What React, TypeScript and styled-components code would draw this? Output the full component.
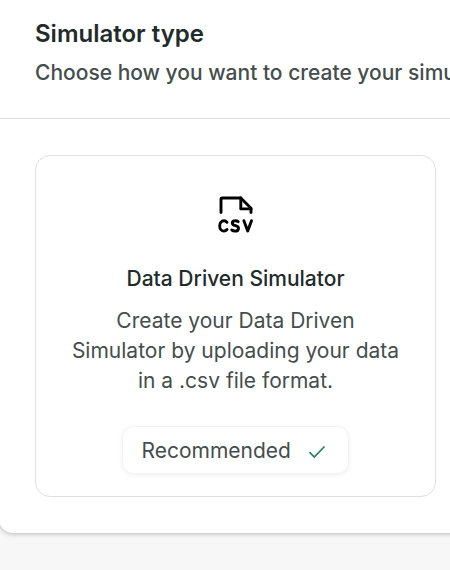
import React from "react";
import styled, { createGlobalStyle } from "styled-components";

const GlobalStyle = createGlobalStyle`
  * { box-sizing: border-box; }
  body {
    margin: 0;
    font-family: Inter, sans-serif;
  }
`;

const Page = styled.div`
  height: 100vh;
  overflow: hidden;
  background: #f7f7f7;
`;

const Panel = styled.main`
  width: 900px;
  height: 533px;
  margin-left: -1px;
  background: #fff;
  border-radius: 0 0 14px 14px;
  box-shadow: 0 1px 5px rgba(0, 0, 0, 0.25);
`;

const Header = styled.header`
  height: 119px;
  padding: 19px 0 0 36px;
  border-bottom: 1px solid #dedfdf;
  white-space: nowrap;
`;

const Title = styled.h1`
  margin: 0;
  font-size: 24px;
  line-height: 30px;
  font-weight: 600;
  color: #222b2b;
`;

const Subtitle = styled.p`
  margin: 9px 0 0;
  font-size: 21px;
  line-height: 30px;
  font-weight: 500;
  color: #444e4d;
`;

const Options = styled.div`
  display: flex;
  padding: 36px;
`;

const OptionCard = styled.section`
  display: flex;
  flex-direction: column;
  align-items: center;
  width: 401px;
  height: 342px;
  padding: 37px 34px 0;
  border: 1px solid #dedfdf;
  border-radius: 15px;
`;

const Glyph = styled.svg`
  flex: none;
  width: 45px;
  height: 45px;
  fill: none;
  stroke: #000;
  stroke-width: 2.9px;
  stroke-linecap: round;
  stroke-linejoin: round;
`;

const OptionTitle = styled.h2`
  margin: 26px 0 0;
  font-size: 21px;
  line-height: 30px;
  font-weight: 500;
  color: #222b2b;
`;

const Description = styled.p`
  margin: 12px 0 0;
  font-size: 21px;
  line-height: 30px;
  text-align: center;
  color: #444e4d;
`;

const Tag = styled.div`
  display: flex;
  align-items: center;
  gap: 16px;
  width: 227px;
  height: 48px;
  margin-top: 30px;
  padding-left: 18.5px;
  border: 1px solid #f3f3f3;
  border-radius: 12px;
  box-shadow: 0 1px 4px rgba(0, 0, 0, 0.07);
  font-size: 21px;
  color: #444e4d;
`;

const CsvIcon = () => (
  <Glyph viewBox="0 0 45 45">
    <path d="M8 19.6V6.4A1.4 1.4 0 0 1 9.4 5H27.8L38 15.2V19.6" />
    <path d="M27.8 5V15.9H38" />
    <path d="M14 29.3C13.2 28.3 12.2 27.7 11 27.7C8.5 27.7 6.7 30 6.7 32.9S8.5 38.1 11 38.1C12.2 38.1 13.2 37.5 14 36.5" />
    <path d="M25.2 28.6C24.3 27.9 23.2 27.6 22 27.7C20.3 27.8 19.4 28.8 19.3 30C19.2 33.6 25.7 31.8 25.5 35.3C25.4 37 24 38.1 22.1 38.1C20.8 38.1 19.7 37.7 18.8 37" />
    <path d="M30.9 27.7L34.7 38.1L38.5 27.7" />
  </Glyph>
);

const Check = () => (
  <svg width="20" height="20" viewBox="0 0 20 20" fill="none" stroke="#26815f" strokeWidth="1.7">
    <path d="M2.5 12.2 7.3 17 17.5 6.5" />
  </svg>
);

export default function App() {
  return (
    <Page>
      <GlobalStyle />
      <Panel>
        <Header>
          <Title>Simulator type</Title>
          <Subtitle>Choose how you want to create your simulator</Subtitle>
        </Header>
        <Options>
          <OptionCard>
            <CsvIcon />
            <OptionTitle>Data Driven Simulator</OptionTitle>
            <Description>Create your Data Driven Simulator by uploading your data in a .csv file format.</Description>
            <Tag>
              <span>Recommended</span>
              <Check />
            </Tag>
          </OptionCard>
        </Options>
      </Panel>
    </Page>
  );
}
